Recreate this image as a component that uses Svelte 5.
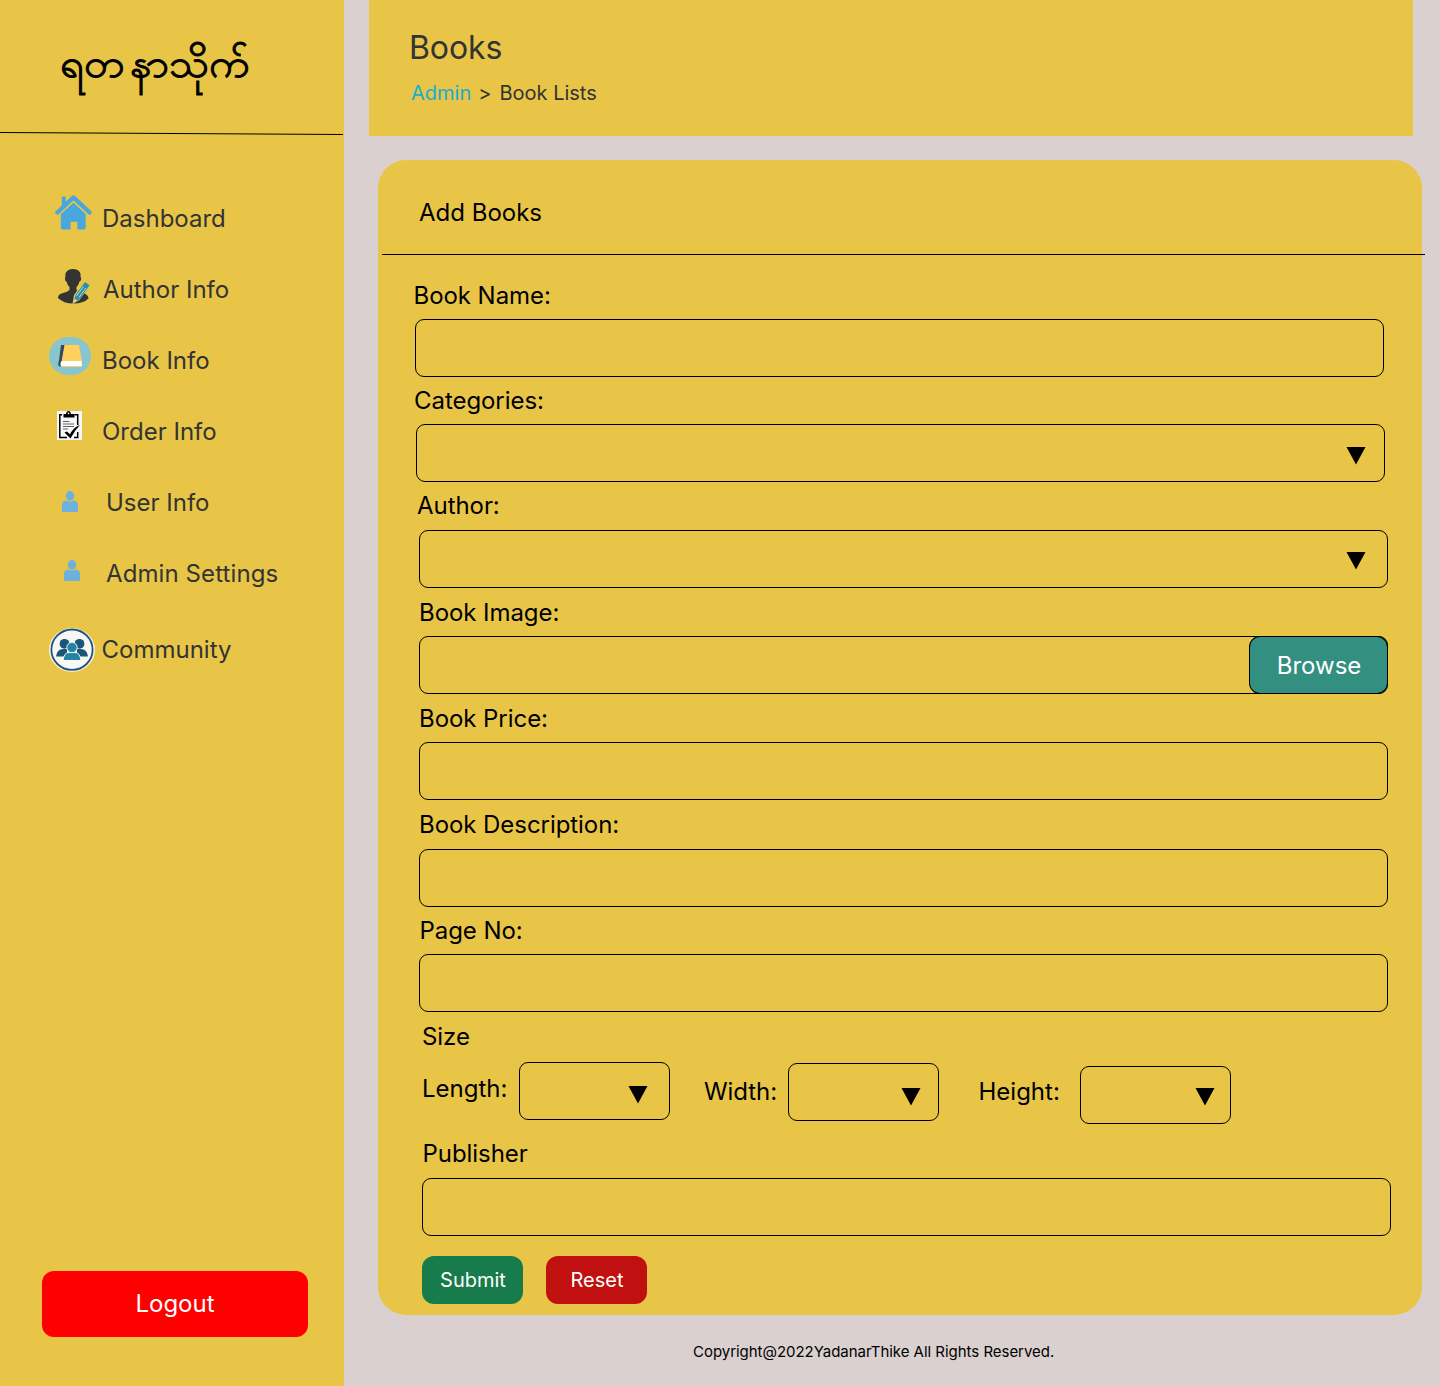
<script>
  const nav = [
    { id: 'dashboard', label: 'Dashboard' },
    { id: 'author', label: 'Author Info' },
    { id: 'book', label: 'Book Info' },
    { id: 'order', label: 'Order Info' },
    { id: 'user', label: 'User Info' },
    { id: 'admin', label: 'Admin Settings' },
    { id: 'community', label: 'Community' }
  ];
  const fields = [
    { id: 'name', label: 'Book Name:' },
    { id: 'categories', label: 'Categories:', kind: 'select' },
    { id: 'writer', label: 'Author:', kind: 'select' },
    { id: 'image', label: 'Book Image:', kind: 'file' },
    { id: 'price', label: 'Book Price:' },
    { id: 'description', label: 'Book Description:' },
    { id: 'pages', label: 'Page No:' }
  ];
  const sizes = [
    { id: 'length', label: 'Length:' },
    { id: 'width', label: 'Width:' },
    { id: 'height', label: 'Height:' }
  ];
</script>

{#snippet arrow()}
  <svg class="arrow" width="20" height="18" viewBox="0 0 20 18"><path d="M.5 0h19L10 17.5z" /></svg>
{/snippet}

{#snippet icon(id)}
  {#if id === 'dashboard'}
    <svg width="37" height="37" viewBox="0 0 38 37">
      <path d="M7 2h4v6l-4 4z" fill="#48a7dc" />
      <path d="M2.500 18.500 19 3l16.500 15.500" fill="none" stroke="#48a7dc" stroke-width="4.400" stroke-linecap="round" stroke-linejoin="round" />
      <path d="M19 8.500 31.500 20V34q0 2-2 2H23v-8h-7v8H8q-2 0-2-2V20z" fill="#48a7dc" />
    </svg>
  {:else if id === 'author'}
    <svg width="34" height="36" viewBox="0 0 34 36">
      <path d="M8.500 9C7.500 4 11 1 16 1s8.500 3 7.500 8q1 .5.500 2.500-.3 2-1.500 2-.8 3.500-3 5.500v3q3 2 8 3.500 4 2 4 5-5 5-15 5T1 30q0-4 5-5 4.500-1 6.500-3v-3q-2.200-2-3-5.500-1.200 0-1.500-2-.5-2 .5-2.500z" fill="#333" />
      <path d="m15.500 36 1.500-9L27 13.500l6 4L22.500 32z" fill="#e8c547" />
      <path d="m17 34.500 1.500-7.500 9.500-13 4.500 3.300L23 31z" fill="#278fb0" />
      <path d="m19.500 28 7-9.500m-4.500 11 7-9.500" stroke="#eee9c4" stroke-width=".8" fill="none" />
      <path d="m17 34.500.8-3.500 2.300 1.600z" fill="#eee9c4" />
    </svg>
  {:else if id === 'book'}
    <svg width="42" height="38" viewBox="0 0 42 38">
      <rect width="42" height="38" rx="19" fill="#89c5cc" />
      <path d="M12 8h4l-3 16-3.500 3z" fill="#34495e" />
      <path d="M15.500 8H30l3 17H12.500z" fill="#ffd05b" />
      <path d="M12 24h20.500l.5 5.500H12q-2-2.500 0-5.500z" fill="#fff" />
      <path d="M9.700 25 13 23q-3 4-.5 6.500-4.500.5-2.800-4.500z" fill="#34495e" />
      <path d="M13 29.200h20v.8H13z" fill="#ffd05b" />
    </svg>
  {:else if id === 'order'}
    <svg width="25" height="29" viewBox="0 0 25 29">
      <path d="M0 0h25v29H0z" fill="#f7f7f7" />
      <path d="M5 3.800H2.800V26.500H10M17.500 3.800h3.200V14M20.700 21v5.500H17" fill="none" stroke="#000" stroke-width="1.500" />
      <path d="M6.500 6.500V3H9q.5-3 2.500-3T14 3h3.500v3.500z" fill="#000" />
      <circle cx="11.500" cy="2.400" r=".8" fill="#fff" />
      <path d="M6 10.500h6.500M6 13h11M6 15.500h11M6 18h5" stroke="#666" stroke-width="1" />
      <path d="m7.500 21.500 2.500-1 2.800 2.800Q17 16 23 14q-5.500 5.500-9.500 13.500z" fill="#000" />
    </svg>
  {:else if id === 'community'}
    <svg width="46" height="44" viewBox="0 0 46 44">
      <ellipse cx="23" cy="22" rx="23" ry="22" fill="#f7f3e3" />
      <ellipse cx="23" cy="21.700" rx="20.600" ry="20.200" fill="#f7f7f7" stroke="#1b5578" stroke-width="1.800" />
      <g fill="#1b5578">
        <circle cx="15.500" cy="15.800" r="4.900" /><circle cx="30.500" cy="15.800" r="4.900" />
        <path d="M7 28.500q1-7.500 7-7.500h4v7.500zM39 28.500q-1-7.500-7-7.500h-4v7.500z" />
      </g>
      <g fill="#2583a5" stroke="#f7f7f7" stroke-width="1">
        <path d="M14 32.500q1-8 6-8h6q5 0 6 8z" /><circle cx="23" cy="19.500" r="5.200" />
      </g>
    </svg>
  {:else}
    <svg width="16" height="21" viewBox="0 0 16 21" fill="#6eb0de">
      <ellipse cx="8" cy="4.800" rx="4.200" ry="4.800" />
      <path d="M0 21v-7q0-4 4-4.500 4 2 8 0 4 .5 4 4.500v7z" />
    </svg>
  {/if}
{/snippet}

<div class="page">
  <aside>
    <div class="brand">
      <div class="logo" lang="my"><span>ရတ</span><span>နာ</span><span class="last">သိုက်</span></div>
    </div>
    <svg class="rule" width="343" height="4" viewBox="0 0 343 4"><path d="M0 .5 343 2.500" stroke="#000" /></svg>
    <nav>
      {#each nav as item}
        <a class="item {item.id}">
          <span class="icon">{@render icon(item.id)}</span>
          <span class="text">{item.label}</span>
        </a>
      {/each}
    </nav>
    <button class="logout">Logout</button>
  </aside>

  <main>
    <header>
      <h1>Books</h1>
      <div class="crumbs"><a>Admin</a><span class="sep">&gt;</span><span>Book Lists</span></div>
    </header>

    <section class="card">
      <h2>Add Books</h2>
      <div class="line"></div>
      {#each fields as f}
        <div class="field {f.id}">
          <div class="label">{f.label}</div>
          <div class="box">
            {#if f.kind === 'select'}{@render arrow()}{/if}
            {#if f.kind === 'file'}<button class="browse">Browse</button>{/if}
          </div>
        </div>
      {/each}
      <div class="label size-title">Size</div>
      <div class="sizes">
        {#each sizes as s}
          <div class="size {s.id}">
            <span class="label">{s.label}</span>
            <div class="box small">{@render arrow()}</div>
          </div>
        {/each}
      </div>
      <div class="field publisher">
        <div class="label">Publisher</div>
        <div class="box"></div>
      </div>
      <div class="actions">
        <button class="submit">Submit</button>
        <button class="reset">Reset</button>
      </div>
    </section>

    <footer>Copyright@2022YadanarThike All Rights Reserved.</footer>
  </main>
</div>

<style>
  :global(body) { background: #dad0cf; }
  * { box-sizing: border-box; }
  .page { display: flex; width: 1440px; height: 1386px; overflow: hidden; background: #dad0cf; font: 24px/29px Inter, sans-serif; color: #000; }
  svg { display: block; flex: none; }
  button { border: 0; padding: 0; font: inherit; color: #fff; }
  aside { width: 344px; height: 1386px; background: #e8c547; display: flex; flex-direction: column; color: #333; flex: none; }
  .brand { height: 132px; padding: 28px 0 0 60px; }
  .logo { display: flex; gap: 5px; width: 190px; font-size: 40px; line-height: 70px; color: #000; white-space: nowrap; transform: scaleX(1.035); transform-origin: 0 0; -webkit-text-stroke: 1px #000; }
  .last { margin-left: -5px; }
  nav { display: flex; flex-direction: column; padding-top: 47px; }
  .item { display: flex; align-items: center; height: 71px; }
  .icon { width: 102px; flex: none; }
  .dashboard .icon { padding: 0 0 12px 55px; }
  .author .icon { padding: 0 0 8px 57px; width: 103px; }
  .book .icon { padding: 0 0 9px 49px; }
  .order .icon { padding: 0 0 12px 57px; }
  .user .icon { padding: 0 0 3px 62px; width: 106px; }
  .admin .icon { padding: 0 0 7px 64px; width: 106px; }
  .admin .text { letter-spacing: .1px; }
  .community .icon { padding: 0 0 0 49px; width: 101.500px; }
  .community { margin-top: 5px; }
  .logout { width: 266px; height: 66px; margin: auto 0 49px 42px; padding-bottom: 2px; background: #f00; border-radius: 12px; }
  main { flex: 1; padding-left: 25px; }
  header { width: 1044px; height: 136px; background: #e8c547; color: #333; padding: 28px 0 0 40px; }
  h1 { margin: 0; font-size: 32px; line-height: 39px; font-weight: 400; letter-spacing: -.1px; }
  .crumbs { display: flex; font-size: 20px; line-height: 24px; padding: 14px 0 0 2px; }
  .crumbs a { color: #17aecf; }
  .sep { margin: 0 8px 0 7px; }
  .card { width: 1044px; height: 1155px; margin: 24px 0 0 9px; background: #e8c547; border-radius: 28px; display: flow-root; }
  h2 { margin: 38px 0 0 41px; font-size: 24px; line-height: 29px; font-weight: 400; }
  .line { width: 1043px; height: 1px; margin: 27px 0 26px 4px; background: #000; }
  .field { padding: 0 0 10px 41px; }
  .label { margin-bottom: 9px; white-space: nowrap; letter-spacing: -.06px; }
  .box { width: 969px; height: 58px; border: 1px solid #000; border-radius: 9px; display: flex; justify-content: flex-end; padding: 22px 18px 0 0; }
  .name, .categories, .pages { padding-bottom: 9px; }
  .description { padding-bottom: 9px; }
  .name { padding-left: 37px; }
  .name .label { margin-left: -1.500px; }
  .categories .label { margin-left: -2px; }
  .categories { padding-left: 38px; }
  .writer .label { margin: 0 0 10px -2px; }
  .writer .box { padding: 21px 21px 0 0; }
  .description .label { margin-bottom: 10px; }
  .pages .label { padding-left: .5px; }
  .image .box { padding: 0; }
  .browse { width: 137px; height: 56px; padding-left: 1px; background: #338f7f; border-radius: 10px; box-shadow: 0 0 0 1px #000; }
  .size-title { margin: 1px 0 11px 44px; }
  .sizes { display: flex; height: 77px; padding-left: 44px; }
  .size { display: flex; }
  .size .label { padding-top: 12px; }
  .length .label { width: 97px; letter-spacing: 0; }
  .width { margin: 1px 0 0 34px; }
  .width .label { padding-top: 14px; width: 84px; }
  .height { margin: 4px 0 0 39px; }
  .height .label { padding-top: 11px; padding-left: .5px; width: 102px; letter-spacing: 0; }
  .small { width: 151px; padding-right: 21.500px; padding-top: 23px; }
  .width .small { padding-right: 17.500px; padding-top: 24px; }
  .height .small { padding-right: 15.500px; padding-top: 21px; }
  .publisher { padding-left: 44px; padding-bottom: 20px; }
  .publisher .label { margin-bottom: 10px; padding-left: .5px; }
  .actions { display: flex; gap: 23px; padding-left: 44px; font-size: 20px; }
  .actions button { width: 101px; height: 48px; padding-left: 1px; border-radius: 12px; }
  .submit { background: #177b4b; }
  .reset { background: #c11010; }
  footer { font-size: 15px; line-height: 18px; padding: 28px 0 0 324px; letter-spacing: -.03px; }
</style>
